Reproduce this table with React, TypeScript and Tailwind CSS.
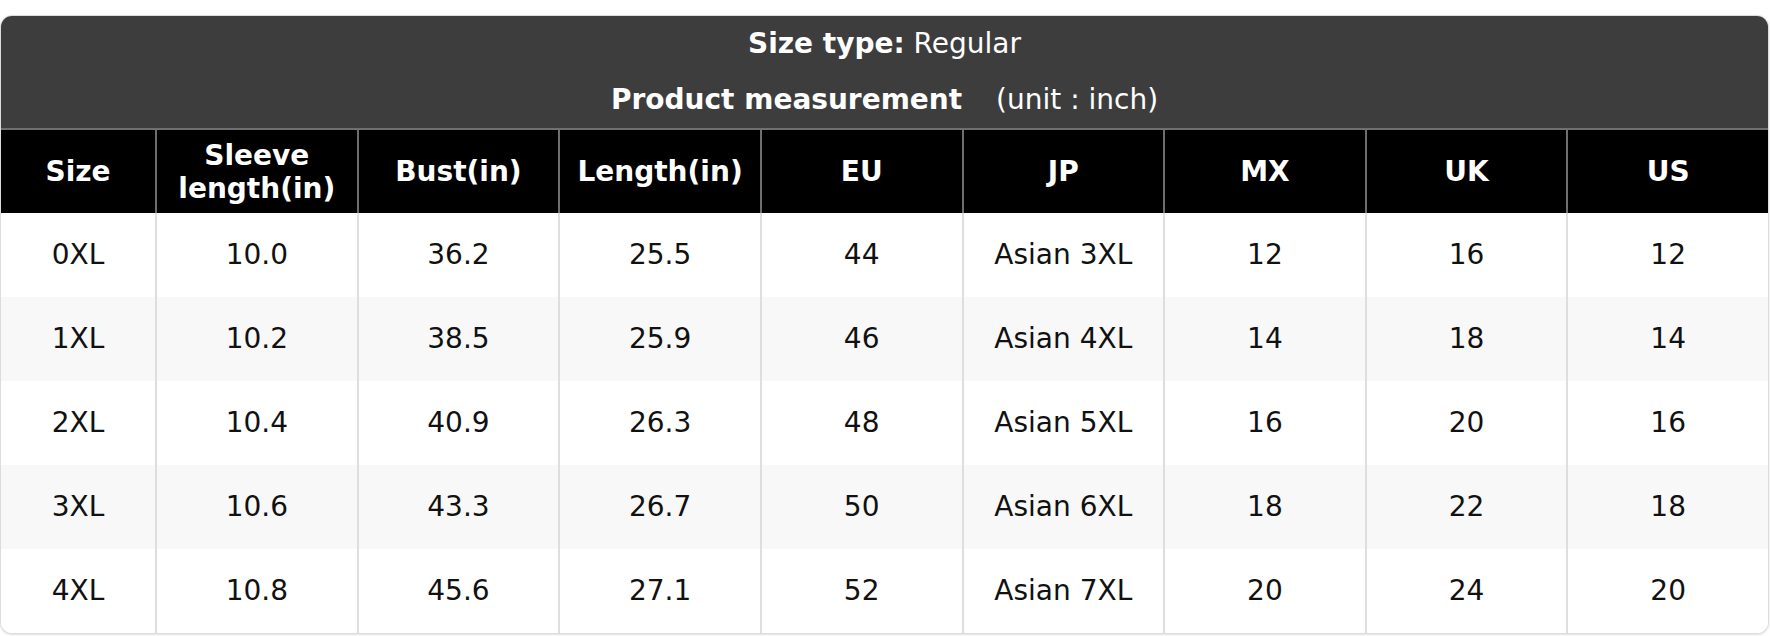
import React from "react";

const headers = ["Size", "Sleeve length(in)", "Bust(in)", "Length(in)", "EU", "JP", "MX", "UK", "US"];

const rows = [
  ["0XL", "10.0", "36.2", "25.5", "44", "Asian 3XL", "12", "16", "12"],
  ["1XL", "10.2", "38.5", "25.9", "46", "Asian 4XL", "14", "18", "14"],
  ["2XL", "10.4", "40.9", "26.3", "48", "Asian 5XL", "16", "20", "16"],
  ["3XL", "10.6", "43.3", "26.7", "50", "Asian 6XL", "18", "22", "18"],
  ["4XL", "10.8", "45.6", "27.1", "52", "Asian 7XL", "20", "24", "20"],
];

export default function App() {
  return (
    <div className="min-h-screen bg-white pt-[15px] font-['DejaVu_Sans',sans-serif]">
      <div className="w-[1769px] overflow-hidden rounded-[12px] border border-[#dcdcdc] bg-white shadow-sm">
        {/* title block */}
        <div className="flex flex-col items-center bg-[#3d3d3d] text-[28px] leading-[56px] text-white border-b-2 border-[#707070]">
          <div>
            <span className="font-bold">Size type:</span> Regular
          </div>
          <div>
            <span className="font-bold mr-[25px]">Product measurement</span> (unit : inch)
          </div>
        </div>

        <div className="grid grid-cols-[154px_repeat(8,minmax(0,1fr))]">
          {headers.map((h, i) => (
            <div
              key={h}
              className={`flex h-[83px] items-center justify-center bg-black px-2 text-center text-[28px] font-bold leading-[33px] text-white ${
                i > 0 ? "border-l-2 border-[#6e6e6e]" : ""
              }`}
            >
              {h}
            </div>
          ))}

          {rows.map((r, ri) =>
            r.map((c, ci) => (
              <div
                key={ri + "-" + ci}
                className={`flex h-[84px] items-center justify-center text-[28px] text-[#111] ${
                  ri % 2 === 1 ? "bg-[#f8f8f8]" : "bg-white"
                } ${ci > 0 ? "border-l-2 border-[#dedede]" : ""}`}
              >
                {c}
              </div>
            ))
          )}
        </div>
      </div>
    </div>
  );
}
